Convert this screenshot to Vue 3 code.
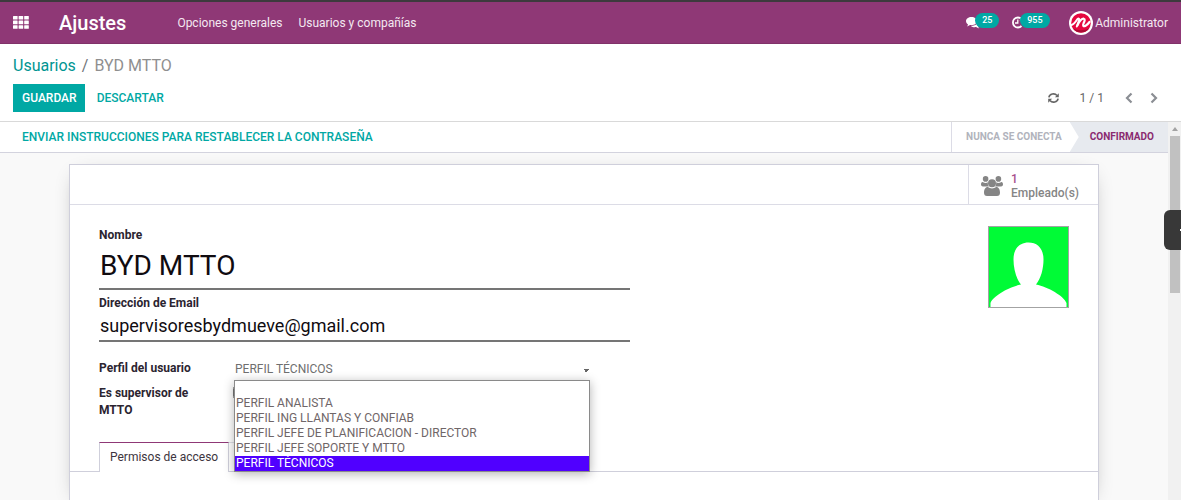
<script setup>
import { ref } from 'vue'

const name = ref('BYD MTTO')
const email = ref('supervisoresbydmueve@gmail.com')
const supervisor = ref(false)
const profile = ref('PERFIL TÉCNICOS')
const profiles = [
  '',
  'PERFIL ANALISTA',
  'PERFIL ING LLANTAS Y CONFIAB',
  'PERFIL JEFE DE PLANIFICACION - DIRECTOR',
  'PERFIL JEFE SOPORTE Y MTTO',
  'PERFIL TÉCNICOS'
]
</script>

<template>
  <div class="app">
    <header class="navbar">
      <button class="apps" aria-label="Aplicaciones">
        <svg width="16" height="13" viewBox="0 0 16 13" fill="#fff">
          <template v-for="r in 3" :key="r">
            <rect v-for="c in 3" :key="c" :x="(c - 1) * 5.6" :y="(r - 1) * 4.6" width="4.6" height="3.6" rx="0.5" />
          </template>
        </svg>
      </button>
      <a href="#" class="brand">Ajustes</a>
      <nav class="menu">
        <a href="#">Opciones generales</a>
        <a href="#">Usuarios y compañías</a>
      </nav>
      <div class="systray">
        <button class="tray" aria-label="Mensajes">
          <svg width="14" height="12" viewBox="0 0 14 12" fill="#fff">
            <path d="M5.5 0C8.600 0 11 1.800 11 4.100S8.600 8.200 5.500 8.200c-.5 0-1 0-1.500-.1C3.200 8.700 2.200 9.300 1 9.500c.5-.5.9-1.100 1-1.900C.8 6.800 0 5.500 0 4.100 0 1.800 2.400 0 5.500 0z" />
            <path d="M12 3.200c1.200.7 2 1.800 2 3.100 0 1.400-.8 2.500-1.900 3.200.1.800.6 1.400 1.100 1.900-1.300-.2-2.300-.8-3.100-1.400-2 .4-4-.1-5.200-1.100C9 9 12.400 6.800 12 3.200z" />
          </svg>
          <span class="badge">25</span>
        </button>
        <button class="tray clock" aria-label="Actividades">
          <svg width="13" height="13" viewBox="0 0 13 13" fill="none" stroke="#fff">
            <path d="M10.500 10a5 5 0 1 1 0-7" stroke-width="1.800" />
            <path d="M6.800 3.500V7H4" stroke-width="1.300" />
            <path d="M8.500 4.800h3.500V1z" fill="#fff" stroke="none" />
          </svg>
          <span class="badge">955</span>
        </button>
        <button class="user">
          <svg width="24" height="24" viewBox="0 0 24 24">
            <circle cx="12" cy="12" r="12" fill="#fff" />
            <circle cx="12" cy="12" r="9.800" fill="#e5083f" />
            <path d="M3.500 17c5 3 12 3 17 0-4 6-13 6-17 0z" fill="#a90c35" />
            <g fill="none" stroke="#fff" stroke-linecap="round" stroke-linejoin="round">
              <path d="M2.500 14C4.500 13.500 6.500 11 8.500 8c1.200-.8 2.200-.2 1.700 1.200L7.800 15.500" stroke-width="2" />
              <path d="M8.500 14.200c2-4 4.500-6.700 6.300-6.500 1.700.4.600 2.700-.2 4.500-1 2.500-.2 3.600 1.700 2.700 1.700-.8 3-2.200 4.200-3.900" stroke-width="2.200" />
            </g>
          </svg>
          <span>Administrator</span>
        </button>
      </div>
    </header>

    <section class="control">
      <div class="crumbs"><a href="#">Usuarios</a><span class="sep">/</span><span class="current">BYD MTTO</span></div>
      <div class="actions">
        <button class="save">GUARDAR</button>
        <button class="discard">DESCARTAR</button>
        <div class="pager">
          <button class="refresh" aria-label="Recargar">
            <svg width="11" height="10" viewBox="0 0 11 10" fill="none" stroke="#666" stroke-width="1.600">
              <path d="M.9 4.300A4.500 3.900 0 0 1 9 2.500M10.100 5.700A4.500 3.900 0 0 1 2 7.500" />
              <path d="M10.800.3v4H6.900zM.2 9.700v-4h3.900z" fill="#666" stroke="none" />
            </svg>
          </button>
          <span class="count">1 / 1</span>
          <button class="prev" aria-label="Anterior">
            <svg width="8" height="12" viewBox="0 0 8 12" fill="none" stroke="#8b8e94" stroke-width="2.200"><path d="M6.500 1.500 2 6l4.500 4.500" /></svg>
          </button>
          <button aria-label="Siguiente">
            <svg width="8" height="12" viewBox="0 0 8 12" fill="none" stroke="#8b8e94" stroke-width="2.200"><path d="M1.500 1.500 6 6l-4.500 4.500" /></svg>
          </button>
        </div>
      </div>
    </section>

    <div class="viewport">
      <main class="content">
        <div class="statusbar">
          <button class="reset">ENVIAR INSTRUCCIONES PARA RESTABLECER LA CONTRASEÑA</button>
          <div class="states">
            <span class="state">NUNCA SE CONECTA</span>
            <span class="state active">CONFIRMADO</span>
          </div>
        </div>

        <article class="sheet">
          <div class="buttonbox">
            <button class="stat">
              <svg width="22" height="20" viewBox="0 0 22 20" fill="#858585">
                <circle cx="4.600" cy="2.900" r="2.800" />
                <circle cx="17.400" cy="2.900" r="2.800" />
                <path d="M2 6.200c1.600 1 3.600 1 5 .1-.5 1.600 0 3.100.9 4.200H2C.6 10.500 0 9.700 0 8.600c0-1.500.7-2.900 2-2.400zM20 6.200c-1.600 1-3.600 1-5 .1.500 1.600 0 3.100-.9 4.200H20c1.400 0 2-.8 2-1.900 0-1.500-.7-2.900-2-2.400z" />
                <circle cx="11" cy="7.200" r="4" />
                <path d="M6.800 11.100c2.600 1.800 5.800 1.800 8.400 0 2.600 0 3.800 2.500 3.800 5.600 0 2-1 3.300-3 3.300H6c-2 0-3-1.300-3-3.300 0-3.100 1.200-5.600 3.800-5.600z" />
              </svg>
              <span class="stat-text"><b>1</b><span>Empleado(s)</span></span>
            </button>
          </div>

          <div class="body">
            <div class="top">
              <div class="identity">
                <label for="name">Nombre</label>
                <input id="name" v-model="name" class="big" type="text" />
                <label for="email" class="second">Dirección de Email</label>
                <input id="email" v-model="email" class="mid" type="email" />
              </div>
              <svg class="photo" width="81" height="82" viewBox="0 0 81 82" role="img" aria-label="Foto">
                <rect x="0.500" y="0.500" width="80" height="81" fill="#00fb36" stroke="#a3a3a3" />
                <path d="M2.500 81v-4C5 70 21 61 33 58.500c-5-6-7.500-16-7.500-25C25.500 22 32 16.500 40.500 16.500S55.500 22 55.500 33.500c0 9-2.500 19-7.500 25C60 61 76 70 78.500 77v4z" fill="#fff" />
              </svg>
            </div>

            <div class="fields">
              <label for="profile">Perfil del usuario</label>
              <div class="cell">
                <select id="profile" v-model="profile">
                  <option v-for="p in profiles" :key="p" :value="p">{{ p }}</option>
                </select>
                <ul class="options" role="listbox" aria-label="Perfil del usuario">
                  <li v-for="p in profiles" :key="p" role="option" :aria-selected="p === profile" :class="{ chosen: p === profile }">{{ p }}</li>
                </ul>
              </div>
              <label for="supervisor">Es supervisor de MTTO</label>
              <div><input id="supervisor" v-model="supervisor" type="checkbox" /></div>
            </div>
          </div>

          <div class="tabs" role="tablist">
            <button class="tab selected" role="tab" aria-selected="true">Permisos de acceso</button>
            <button class="tab" role="tab" aria-selected="false" aria-label="Preferencias"></button>
          </div>
        </article>
      </main>
      <div class="scrollbar" aria-hidden="true">
        <span class="up"></span>
        <span class="thumb"></span>
      </div>
      <button class="handle" aria-label="Abrir panel"></button>
    </div>
  </div>
</template>

<style>
body {
  margin: 0;
  overflow: hidden;
}
</style>

<style scoped>
.app {
  height: 100vh;
  display: flex;
  flex-direction: column;
  font: 12px/17px Roboto, "Liberation Sans", sans-serif;
  color: #666;
  background: #fff;
}
.app *,
.app {
  box-sizing: border-box;
}
button {
  font: inherit;
  color: inherit;
  background: none;
  border: 0;
  padding: 0;
  display: flex;
  align-items: center;
}
a {
  text-decoration: none;
  color: inherit;
}
svg {
  display: block;
  flex: none;
}
.navbar {
  height: 44px;
  flex: none;
  display: flex;
  align-items: center;
  padding: 0 13px;
  background: #8f3876;
  border-top: 2px solid #3d3a3d;
  border-bottom: 1px solid #803269;
  color: #f4e9f1;
}
.brand {
  margin-left: 30px;
  font-size: 20px;
  font-weight: 500;
  line-height: 24px;
  color: #fff;
}
.menu {
  display: flex;
  gap: 16px;
  margin-left: 51px;
  padding-top: 2px;
}
.systray {
  display: flex;
  align-items: center;
  margin-left: auto;
}
.tray {
  position: relative;
  width: 45px;
  height: 24px;
}
.tray.clock {
  width: 58px;
}
.badge {
  position: absolute;
  left: 9px;
  top: 2px;
  padding: 0 7px;
  border-radius: 8px;
  background: #00a8a4;
  color: #fff;
  font-size: 9px;
  font-weight: 500;
  line-height: 15px;
}
.user {
  gap: 2px;
}
.user span {
  padding-top: 2px;
}
.control {
  height: 78px;
  flex: none;
  padding: 11px 23px 0 13px;
  border-bottom: 1px solid #d9d9d9;
}
.crumbs {
  font-size: 16px;
  line-height: 21px;
  color: #6f7378;
}
.crumbs a {
  color: #009592;
}
.sep {
  padding: 0 6px;
}
.current {
  color: #8f8f8f;
}
.actions {
  display: flex;
  align-items: center;
  margin-top: 8px;
}
.save,
.discard {
  height: 28px;
  padding-top: 1px;
  font-weight: 500;
}
.save {
  padding: 1px 8px 0 9px;
  background: #00a8a4;
  color: #fff;
}
.discard {
  margin-left: 12px;
  color: #00a8a4;
}
.pager {
  display: flex;
  align-items: center;
  margin-left: auto;
}
.count {
  margin: 0 21px;
}
.prev {
  margin-right: 17px;
}
.viewport {
  position: relative;
  flex: 1;
  min-height: 0;
  display: flex;
}
.content {
  flex: 1;
  min-width: 0;
  overflow: hidden;
  display: flex;
  flex-direction: column;
  background: #f9f9f9;
}
.statusbar {
  height: 31px;
  flex: none;
  display: flex;
  justify-content: space-between;
  padding-left: 22px;
  background: #fff;
  border-bottom: 1px solid #d3d3de;
}
.reset {
  padding-top: 1px;
  font-weight: 500;
  color: #00a8a4;
}
.states {
  display: flex;
  border-left: 1px solid #dcdce6;
  font-size: 10px;
  font-weight: 700;
  line-height: 29px;
}
.state {
  padding: 0 8px 0 14px;
  color: #b1b3bc;
}
.state.active {
  padding: 0 14px 0 20px;
  background: #e7eaef;
  color: #8a2b70;
  clip-path: polygon(0 0, 100% 0, 100% 100%, 0 100%, 9px 50%);
}
.sheet {
  flex: 1;
  margin: 11px 69px 0;
  background: #fff;
  border: 1px solid #cfcfdb;
  border-bottom: 0;
  box-shadow: 0 5px 20px -10px rgba(0, 0, 0, 0.45);
}
.buttonbox {
  height: 40px;
  display: flex;
  justify-content: flex-end;
  border-bottom: 1px solid #dcdce6;
}
.stat {
  gap: 8px;
  padding: 3px 19px 0 12px;
  border-left: 1px solid #dcdce6;
  text-align: left;
}
.stat-text {
  display: flex;
  flex-direction: column;
  font-weight: 500;
  line-height: 14px;
  color: #858585;
}
.stat-text b {
  font-weight: 500;
  color: #a8508c;
}
.body {
  padding: 21px 29px 0;
}
.top {
  display: flex;
  justify-content: space-between;
}
.identity {
  width: 531px;
  max-width: 80%;
  display: flex;
  flex-direction: column;
  padding-top: 1px;
}
label {
  font-weight: 700;
  color: #2b2430;
}
.second {
  margin-top: 5px;
}
.big,
.mid {
  width: 100%;
  padding: 0 1px;
  border: 0;
  border-bottom: 2px solid #757575;
  outline: 0;
  background: transparent;
  font-family: inherit;
  color: #100b10;
}
.big {
  height: 46px;
  padding-bottom: 1px;
  font-size: 28px;
}
.mid {
  height: 30px;
  padding-bottom: 1px;
  font-size: 18px;
}
.fields {
  display: grid;
  grid-template-columns: 107px 354px;
  column-gap: 29px;
  row-gap: 6px;
  margin-top: 18px;
}
.cell {
  position: relative;
}
select {
  display: block;
  width: 100%;
  height: 19px;
  padding: 0;
  border: 0;
  appearance: none;
  outline: 0;
  font: inherit;
  color: #6f6f6f;
  background: linear-gradient(to bottom left, #666 50%, transparent 50%) no-repeat right 3px top 9px / 3px 3px,
    linear-gradient(to bottom right, #666 50%, transparent 50%) no-repeat right 0 top 9px / 3px 3px;
}
.options {
  position: absolute;
  z-index: 2;
  top: 20px;
  left: -1px;
  right: -1px;
  margin: 0;
  padding: 0;
  list-style: none;
  line-height: 15px;
  color: #6f6668;
  background: #fff;
  border: 1px solid #8a8a8a;
  box-shadow: 0 2px 10px rgba(0, 0, 0, 0.3);
}
.options li {
  height: 15px;
  padding-left: 1px;
}
.options .chosen {
  background: #5000ff;
  color: #fff;
}
input[type='checkbox'] {
  display: block;
  width: 13px;
  height: 13px;
  margin: 1px 0 0 -2px;
}
.tabs {
  display: flex;
  height: 30px;
  margin-top: 23px;
  padding-left: 29px;
  box-shadow: inset 0 -1px #cfcfdb;
}
.tab {
  width: 88px;
  padding: 0 10px;
  border-top: 1px solid #dedee6;
  border-right: 1px solid #dedee6;
  color: #3d3540;
}
.tab.selected {
  width: auto;
  background: #fff;
  border: 1px solid #cfcfdb;
  border-top-color: #8f3876;
  border-bottom: 0;
}
.scrollbar {
  width: 13px;
  flex: none;
  display: flex;
  flex-direction: column;
  align-items: center;
  background: #f1f1f1;
}
.up {
  margin: 5px 0 5px;
  border: 3px solid transparent;
  border-top: 0;
  border-bottom: 4px solid #a3a3a3;
}
.thumb {
  width: 10px;
  height: 157px;
  background: #c1c1c1;
}
.handle {
  position: absolute;
  right: 0;
  top: 88px;
  width: 17px;
  height: 40px;
  justify-content: flex-end;
  border-radius: 6px 0 0 6px;
  background: #383838;
}
.handle::after {
  content: '';
  width: 1px;
  height: 2px;
  background: #fff;
}
</style>
